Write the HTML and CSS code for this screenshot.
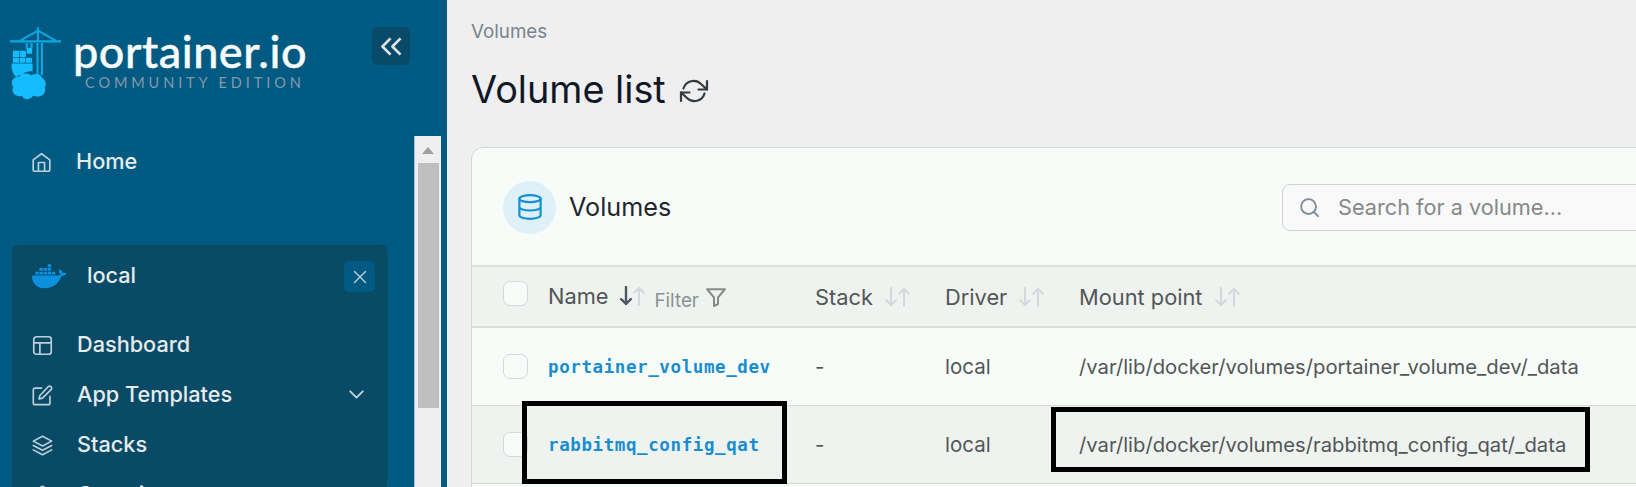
FILE: index.html
```html
<!DOCTYPE html>
<html lang="en">
<head>
<meta charset="utf-8">
<title>Volume list</title>
<link rel="stylesheet" href="styles.css">
</head>
<body>
<svg class="defs" width="0" height="0">
  <symbol id="sort-down" viewBox="0 0 12 20"><path d="M6 1v17M1.2 13.2L6 18l4.8-4.8"/></symbol>
  <symbol id="sort-up" viewBox="0 0 12 20"><path d="M6 19V2M1.2 6.8L6 2l4.8 4.8"/></symbol>
</svg>
<div class="app">
  <aside class="sidebar">
    <header class="brand">
      <svg class="crane" viewBox="0 0 54 74">
        <path class="mast" d="M28.500 0v15M10 14L28.500 3.500 47 14M0 14.500h52M28 16v32M32.500 16v33M17 16v6M22 16v6"/>
        <path class="load" d="M17 21h5.500v6H17zM3 24h6.500v6.500H3zM10.200 24h6v6.500h-6zM3 31.200h6.500v5H3zM10.200 31.200h5.500v5h-5.500zM16.400 31.200h6v5h-6z"/>
        <path class="load" d="M1.500 37h21.500v8c-6 0-9 1.500-10 3.500-4 0-5 1-6.500 2.500-3.500-3-5-8-5-14z"/>
        <path class="load" d="M9 50.500c3-4 9-4 12.500-1.500 5-2.500 10-1 11.500 3 4 2 4 7 2.500 9.500 1.500 5-2 9-6.500 9-2 .5-4 0-5.500-1-2.500 5-9.500 5-11 .5-7 2-12-4-9-9-4-5.500 0-11 5.500-10.500z"/>
      </svg>
      <div class="wordmark">
        <span class="name">portainer.io</span>
        <span class="edition">COMMUNITY EDITION</span>
      </div>
      <button class="collapse" aria-label="Collapse"><svg viewBox="0 0 22 20"><path d="M10.500 1.500L2 10l8.500 8.500M21 1.500L12.500 10l8.500 8.500"/></svg></button>
    </header>
    <div class="nav">
      <div class="menu">
        <a class="item home"><svg class="ico" viewBox="0 0 24 24"><path d="M2.500 9L12 2l9.500 7v11a2 2 0 0 1-2 2h-15a2 2 0 0 1-2-2zM8.500 22V12h7v10"/></svg><span>Home</span></a>
        <section class="env">
          <div class="env-head">
            <svg class="whale" viewBox="0 0 36 26"><path d="M0 12.500h27c1 0 2-.3 2.500-.7-2-2-2-4-1-6 2 1 3 3 3 4 1.500-.3 3 0 4 .7-1 2-3 2.500-5 2.500C27 21 22 25.500 13 25.500 4 25.500 0 20 0 12.500z"/><path d="M3.500 8.500h3.500v3H3.500zM7.700 8.500h3.500v3H7.700zM12 8.500h3.500v3H12zM16.200 8.500h3.500v3h-3.500zM20.500 8.500H24v3h-3.500zM7.700 4.700h3.500v3H7.700zM12 4.700h3.500v3H12zM16.200 4.700h3.500v3h-3.500zM16.200 1h3.500v3h-3.500z"/></svg>
            <span class="env-name">local</span>
            <button class="close" aria-label="Close"><svg viewBox="0 0 12 12"><path d="M.5.5l11 11M11.500.5l-11 11"/></svg></button>
          </div>
          <a class="item"><svg class="ico" viewBox="0 0 24 24"><rect x="2" y="2" width="20" height="20" rx="3"/><path d="M2 9h20M9 22V9"/></svg><span>Dashboard</span></a>
          <a class="item"><svg class="ico" viewBox="0 0 24 24"><path d="M11 3.500H3.500a2 2 0 0 0-2 2v15a2 2 0 0 0 2 2h15a2 2 0 0 0 2-2V13"/><path d="M18.500 2a2.200 2.200 0 0 1 3.300 3.300L12 15l-4 1 1-4z"/></svg><span>App Templates</span><svg class="chev" viewBox="0 0 16 10"><path d="M1 1.500l7 7 7-7"/></svg></a>
          <a class="item"><svg class="ico" viewBox="0 0 24 24"><path d="M12 1.500L1.500 7 12 12.500 22.500 7zM1.500 17L12 22.500 22.500 17M1.500 12L12 17.500 22.500 12"/></svg><span>Stacks</span></a>
          <a class="item"><svg class="ico" viewBox="0 0 24 24"><path d="M12 1.500l9 5v11l-9 5-9-5v-11zM3 6.500l9 5 9-5M12 11.500v11"/></svg><span>Containers</span></a>
        </section>
      </div>
      <div class="scroll"><svg class="arrow" viewBox="0 0 12 7"><path d="M6 0l6 7H0z"/></svg><div class="thumb"></div></div>
    </div>
  </aside>
  <main class="content">
    <div class="crumb">Volumes</div>
    <div class="title"><h1>Volume list</h1><svg class="refresh" viewBox="0 0 28 24"><path d="M27 2v8.500h-8.500M1 22v-8.500h8.500"/><path d="M3.500 9.500A10.500 10.500 0 0 1 21 5l6 5.500M1 13.500L7 19a10.500 10.500 0 0 0 17.500-4.500"/></svg></div>
    <section class="card">
      <div class="card-head">
        <span class="badge"><svg viewBox="0 0 26 28"><ellipse cx="13" cy="5" rx="11.500" ry="3.800"/><path d="M1.500 5v18c0 2 5 3.800 11.500 3.800S24.500 25 24.500 23V5M1.500 14c0 2 5 3.800 11.500 3.800S24.500 16 24.500 14"/></svg></span>
        <h2>Volumes</h2>
        <div class="search"><svg viewBox="0 0 20 20"><circle cx="9" cy="9" r="7.800"/><path d="M14.800 14.800l4.200 4.200"/></svg><span>Search for a volume...</span></div>
      </div>
      <div class="row head">
        <i class="check"></i>
        <div class="cell name-head"><span>Name</span><span class="sort down"><svg><use href="#sort-down"/></svg><svg><use href="#sort-up"/></svg></span><span class="filter">Filter</span><svg class="funnel" viewBox="0 0 20 19"><path d="M1 1.200h18l-7 8.300v6.500l-4 2V9.500z"/></svg></div>
        <div class="cell"><span>Stack</span><span class="sort"><svg><use href="#sort-down"/></svg><svg><use href="#sort-up"/></svg></span></div>
        <div class="cell"><span>Driver</span><span class="sort"><svg><use href="#sort-down"/></svg><svg><use href="#sort-up"/></svg></span></div>
        <div class="cell"><span>Mount point</span><span class="sort"><svg><use href="#sort-down"/></svg><svg><use href="#sort-up"/></svg></span></div>
      </div>
      <div class="row">
        <i class="check"></i><a class="volume">portainer_volume_dev</a><span>-</span><span>local</span><span class="path">/var/lib/docker/volumes/portainer_volume_dev/_data</span>
      </div>
      <div class="row alt">
        <i class="check"></i><a class="volume">rabbitmq_config_qat</a><span>-</span><span>local</span><span class="path">/var/lib/docker/volumes/rabbitmq_config_qat/_data</span>
        <b class="mark mark-name"></b><b class="mark mark-path"></b>
      </div>
    </section>
  </main>
</div>
</body>
</html>
```
FILE: styles.css
```css
* { box-sizing: border-box; }
body { margin: 0; background: #efefef; font-family: Inter, "Liberation Sans", sans-serif; overflow: hidden; }
svg { display: block; flex: none; fill: none; stroke: currentColor; stroke-linecap: round; stroke-linejoin: round; overflow: visible; }
.defs { position: absolute; }
h1, h2 { margin: 0; font-weight: 400; }
button { border: 0; padding: 0; }
.app { display: flex; height: 487px; overflow: hidden; }

.sidebar { width: 447px; flex: none; background: #005a82; color: #e6ebec; display: flex; flex-direction: column; }
.brand { height: 136px; flex: none; display: flex; align-items: flex-start; padding: 27px 0 0 10px; }
.crane { width: 53px; height: 73px; color: #12b8f8; }
.mast { stroke-width: 2.2; stroke: #0ba6e3; stroke-linecap: butt; }
.load { fill: #13bdff; stroke: none; }
.wordmark { width: 236px; margin-left: 10px; display: flex; flex-direction: column; white-space: nowrap; }
.name { font: 500 45px/48px Lato, sans-serif; color: #f8fcfb; letter-spacing: .5px; -webkit-text-stroke: .4px #f8fcfb; }
.edition { font: 400 14.500px/16px Lato, sans-serif; color: #8499ad; letter-spacing: 3.900px; margin-left: 12px; }
.collapse { width: 38px; height: 38px; margin-left: 63px; border-radius: 6px; background: #094a69; display: grid; place-items: center; color: #dfe6ea; }
.collapse svg { width: 22px; height: 19px; stroke-width: 2.800; stroke-linecap: butt; }

.nav { flex: 1; min-height: 0; display: flex; }
.menu { width: 414px; flex: none; }
.item { height: 50px; display: flex; align-items: center; padding: 0 23px 0 20px; font-size: 21.700px; font-weight: 450; }
.ico { width: 21px; height: 21px; stroke-width: 1.900; color: #bdd0d9; margin: 3px 24px 0 0; }
.home { padding-left: 31px; }
.chev { width: 15px; height: 9px; margin-left: auto; stroke-width: 2.200; color: #bdd0d9; }
.env { margin: 58px 0 0 11px; width: 377px; height: 400px; background: #094a67; border: 1px dotted #126084; border-radius: 6px; }
.env-head { height: 74px; display: flex; align-items: flex-start; padding: 16px 12px 0 20px; }
.whale { width: 35px; height: 26px; margin-top: 2px; fill: #0b91dd; stroke: none; }
.env-name { font-size: 21.700px; font-weight: 500; line-height: 28px; margin: 0 0 0 20px; }
.close { width: 31px; height: 31px; margin-left: auto; border-radius: 5px; background: #005a82; display: grid; place-items: center; color: #c4d5dd; }
.close svg { width: 12px; height: 12px; stroke-width: 1.300; }
.scroll { width: 27px; background: #efefef; border-left: 1px solid #a9c4d0; }
.arrow { width: 12px; height: 7px; margin: 11px 0 9px 7px; fill: #a0a0a0; stroke: none; }
.thumb { width: 21px; height: 245px; margin-left: 3px; background: #bfbfbf; }

.content { flex: 1; padding: 19px 0 0 24px; min-width: 0; }
.crumb { font-size: 18.800px; line-height: 25px; color: #768591; }
.title { display: flex; align-items: center; height: 50px; margin-top: 20px; color: #101828; }
.title h1 { font-size: 37.800px; line-height: 50px; white-space: nowrap; }
.refresh { width: 28px; height: 24px; margin: 3px 0 0 14px; color: #333b40; stroke-width: 2.200; }

.card { width: 1300px; height: 500px; margin-top: 33px; background: #f8fcf9; border: 1.500px solid #d0d5da; border-radius: 12px; overflow: hidden; }
.card-head { height: 117px; display: flex; align-items: center; padding: 1px 0 0 31px; }
.badge { width: 53px; height: 53px; border-radius: 50%; background: #e0f0f9; color: #1590d2; display: grid; place-items: center; }
.badge svg { width: 24px; height: 26px; stroke-width: 2.400; }
.card h2 { font-size: 25.200px; color: #20262d; margin-left: 13px; width: 713px; }
.search { width: 420px; height: 47px; border: 1.500px solid #cfd3d1; border-radius: 8px; background: #f9f9f9; display: flex; align-items: center; padding-left: 17px; font-size: 21.700px; color: #84898a; }
.search svg { width: 19px; height: 19px; color: #7d8c98; stroke-width: 2; margin-right: 19px; }

.row { position: relative; display: grid; grid-template-columns: 76px 267px 130px 134px 1fr; align-items: center; height: 78px; border-bottom: 1px solid #d5dad7; color: #525657; font-size: 20.500px; }
.row + .row > span { white-space: nowrap; }
.row .path { font-size: 20.250px; }
.alt { background: #eff3f0; }
.head { height: 63px; background: #eff3f0; border-top: 2px solid #dce1de; border-bottom: 2px solid #d9ddda; font-size: 21.800px; }
.check { width: 25px; height: 25px; margin-left: 31px; border: 1.500px solid #d4d8de; border-radius: 7px; background: #f8fcf9; }
.head .check { margin-bottom: 7px; }
.cell { display: flex; align-items: center; white-space: nowrap; }
.name-head { padding-bottom: 1px; }
.sort { display: flex; gap: 1px; margin-left: 12px; color: #d3d7de; }
.sort svg { width: 12px; height: 20px; stroke-width: 2; }
.down svg:first-child { color: #4b5663; stroke-width: 2.400; }
.filter { font-size: 18.800px; color: #8a8f91; margin: 8px 0 0 9px; }
.funnel { width: 20px; height: 19px; margin: 3px 0 0 7px; stroke-width: 2; color: #858a8a; }
.volume { font: 700 17.500px "DejaVu Sans Mono", monospace; letter-spacing: .6px; color: #188ed0; }
.mark { position: absolute; border: 5px solid #000; }
.mark-name { left: 50px; top: -5px; width: 265px; height: 83px; }
.mark-path { left: 579px; top: 1px; width: 539px; height: 65px; }
```
